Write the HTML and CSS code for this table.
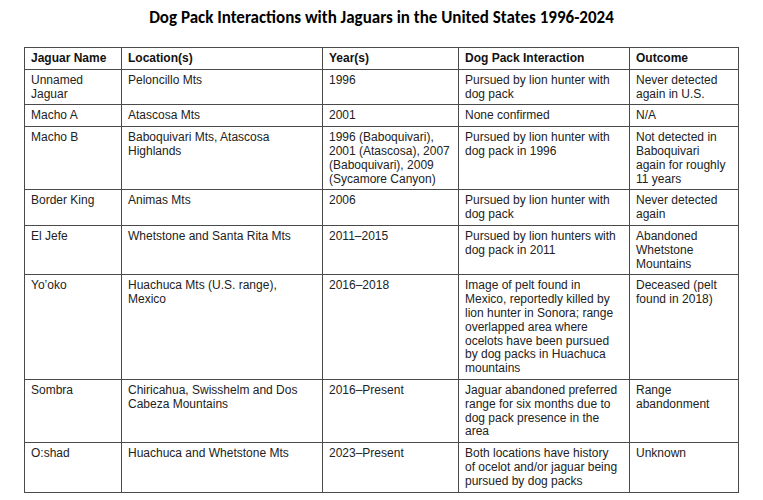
FILE: index.html
```html
<!DOCTYPE html>
<html lang="en">
<head>
<meta charset="utf-8">
<title>Dog Pack Interactions with Jaguars</title>
<link rel="stylesheet" href="styles.css">
</head>
<body>
<main class="page">
  <h1 class="title">Dog Pack Interactions with Jaguars in the United States 1996-2024</h1>
  <table class="data">
    <colgroup>
      <col class="c-name">
      <col class="c-loc">
      <col class="c-year">
      <col class="c-inter">
      <col class="c-out">
    </colgroup>
    <thead>
      <tr>
        <th>Jaguar Name</th>
        <th>Location(s)</th>
        <th>Year(s)</th>
        <th>Dog Pack Interaction</th>
        <th>Outcome</th>
      </tr>
    </thead>
    <tbody>
      <tr>
        <td>Unnamed Jaguar</td>
        <td>Peloncillo Mts</td>
        <td>1996</td>
        <td class="inter">Pursued by lion hunter with dog pack</td>
        <td>Never detected again in U.S.</td>
      </tr>
      <tr>
        <td>Macho A</td>
        <td>Atascosa Mts</td>
        <td>2001</td>
        <td class="inter">None confirmed</td>
        <td>N/A</td>
      </tr>
      <tr>
        <td>Macho B</td>
        <td>Baboquivari Mts, Atascosa Highlands</td>
        <td>1996 (Baboquivari), 2001 (Atascosa), 2007 (Baboquivari), 2009 (Sycamore Canyon)</td>
        <td class="inter">Pursued by lion hunter with dog pack in 1996</td>
        <td>Not detected in Baboquivari again for roughly 11 years</td>
      </tr>
      <tr>
        <td>Border King</td>
        <td>Animas Mts</td>
        <td>2006</td>
        <td class="inter">Pursued by lion hunter with dog pack</td>
        <td>Never detected again</td>
      </tr>
      <tr>
        <td>El Jefe</td>
        <td>Whetstone and Santa Rita Mts</td>
        <td>2011–2015</td>
        <td class="inter">Pursued by lion hunters with dog pack in 2011</td>
        <td>Abandoned Whetstone Mountains</td>
      </tr>
      <tr>
        <td>Yo’oko</td>
        <td>Huachuca Mts (U.S. range), Mexico</td>
        <td>2016–2018</td>
        <td class="inter">Image of pelt found in Mexico, reportedly killed by lion hunter in Sonora; range overlapped area where ocelots have been pursued by dog packs in Huachuca mountains</td>
        <td>Deceased (pelt found in 2018)</td>
      </tr>
      <tr>
        <td>Sombra</td>
        <td>Chiricahua, Swisshelm and Dos Cabeza Mountains</td>
        <td>2016–Present</td>
        <td class="inter">Jaguar abandoned preferred range for six months due to dog pack presence in the area</td>
        <td>Range abandonment</td>
      </tr>
      <tr>
        <td>O:shad</td>
        <td>Huachuca and Whetstone Mts</td>
        <td>2023–Present</td>
        <td class="inter">Both locations have history of ocelot and/or jaguar being pursued by dog packs</td>
        <td>Unknown</td>
      </tr>
    </tbody>
  </table>
</main>
</body>
</html>
```

FILE: styles.css
```css
html, body {
  margin: 0;
  padding: 0;
  background: #ffffff;
}

.page {
  padding: 8px 24px 0 24px;
  color: #1a1a1a;
}

.title {
  font-family: Carlito, Lato, "Liberation Sans", sans-serif;
  font-weight: 700;
  font-size: 17px;
  line-height: 20px;
  text-align: center;
  margin: 0 0 19px 0;
  color: #000;
}

.data {
  border-collapse: collapse;
  table-layout: fixed;
  width: 714px;
  font-family: "Liberation Sans", Arial, sans-serif;
  font-size: 12px;
  line-height: 13.8px;
  color: #222;
}

.c-name { width: 97px; }
.c-loc { width: 201px; }
.c-year { width: 136px; }
.c-inter { width: 171px; }
.c-out { width: 109px; }

.data th,
.data td {
  border: 1px solid #4a4a4a;
  padding: 4px 7px 3px 6px;
  text-align: left;
  vertical-align: top;
}

.data td.inter {
  padding-right: 11px;
}

.data th {
  font-weight: 700;
  color: #111;
}
```
